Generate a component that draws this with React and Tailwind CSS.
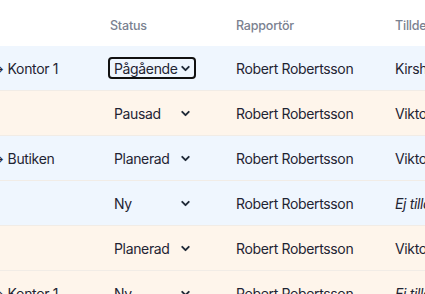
import { ChevronDown } from 'lucide-react'

const rows = [
    { place: 'Kontor 1', status: 'Pågående', reporter: 'Robert Robertsson', assignee: 'Kirsha', bg: 'bg-[#eff6fe]', focused: true },
    { place: '', status: 'Pausad', reporter: 'Robert Robertsson', assignee: 'Viktor', bg: 'bg-[#fef5eb]' },
    { place: 'Butiken', status: 'Planerad', reporter: 'Robert Robertsson', assignee: 'Viktor', bg: 'bg-[#eff6fe]' },
    { place: '', status: 'Ny', reporter: 'Robert Robertsson', assignee: 'Ej tilldelad', bg: 'bg-[#eff6fe]', none: true },
    { place: '', status: 'Planerad', reporter: 'Robert Robertsson', assignee: 'Viktor', bg: 'bg-[#fef5eb]' },
    { place: 'Kontor 1', status: 'Ny', reporter: 'Robert Robertsson', assignee: 'Ej tilldelad', bg: 'bg-[#fef5eb]', none: true },
]

function StatusSelect({ value, focused }) {
    return (
        <div
            className={
                'flex items-center justify-between w-[88px] h-[22px] pl-[4px] pr-[2px] rounded-[4px] ' +
                (focused ? 'border-2 border-[#111]' : 'border-2 border-transparent')
            }
        >
            <span>{value}</span>
            <ChevronDown size={13} strokeWidth={3.5} className="text-[#1f2937] shrink-0" />
        </div>
    )
}

export default function App() {
    return (
        <div className="w-[425px] h-[294px] overflow-hidden bg-white text-[14px] tracking-[-0.35px] text-[#1f2433] font-['Inter',sans-serif]">
            <div className="flex h-[46px] items-center pt-[7px] text-[12.5px] tracking-[-0.2px] font-medium text-[#7a8190]">
                <div className="w-[96px] shrink-0" />
                <div className="w-[128px] shrink-0 pl-[14px]">Status</div>
                <div className="w-[159px] shrink-0 pl-[12px]">Rapportör</div>
                <div className="w-[60px] shrink-0 pl-[12px] whitespace-nowrap">Tilldelad</div>
            </div>
            {rows.map((r, i) => (
                <div key={i} className={'flex h-[45px] items-center border-b border-[#f1ece6] ' + r.bg}>
                    <div className="w-[96px] shrink-0 overflow-hidden whitespace-nowrap">
                        {r.place && <span className="ml-[-9px]">→ {r.place}</span>}
                    </div>
                    <div className="w-[128px] shrink-0 pl-[12px]">
                        <StatusSelect value={r.status} focused={r.focused} />
                    </div>
                    <div className="w-[159px] shrink-0 pl-[12px] whitespace-nowrap">{r.reporter}</div>
                    <div className={'w-[60px] shrink-0 pl-[12px] whitespace-nowrap ' + (r.none ? 'italic' : '')}>{r.assignee}</div>
                </div>
            ))}
        </div>
    )
}
